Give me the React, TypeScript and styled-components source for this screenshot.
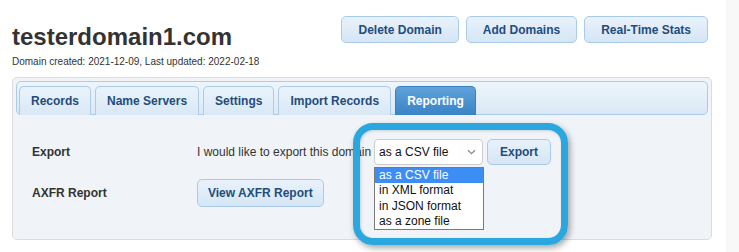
import React from "react";
import styled, { createGlobalStyle } from "styled-components";

const Global = createGlobalStyle`
  html, body { margin: 0; padding: 0; background: #fff; }
  body { font-family: "Liberation Sans", Arial, sans-serif; color: #333; }
`;

const Page = styled.div`
  display: flex;
  width: 739px;
  height: 252px;
  overflow: hidden;
`;

const Main = styled.div`
  width: 700px;
  padding: 16px 14px 0 12px;
  display: flex;
  flex-direction: column;
`;

const Strip = styled.div`
  width: 13px;
  background: #f8f8f8;
`;

const HeaderRow = styled.div`
  display: flex;
  justify-content: space-between;
  align-items: flex-start;
`;

const TitleBlock = styled.div`
  display: flex;
  flex-direction: column;
  gap: 4px;
  padding-top: 7px;
`;

const Title = styled.h1`
  margin: 0;
  font-size: 24px;
  line-height: 28px;
  font-weight: bold;
  color: #333;
`;

const Meta = styled.div`
  font-size: 10px;
  line-height: 14px;
  color: #333;
`;

const ButtonGroup = styled.div`
  display: flex;
  gap: 7px;
  margin-right: 4px;
`;

const Button = styled.button<{ $px: number; $h: number }>`
  height: ${(p) => p.$h}px;
  padding: 0 ${(p) => p.$px}px;
  font-family: "Liberation Sans", Arial, sans-serif;
  font-size: 12px;
  font-weight: bold;
  color: #234c7a;
  background: linear-gradient(#e9f2fb, #d5e6f5);
  border: 1px solid #a9cbe9;
  border-radius: 5px;
  white-space: nowrap;
  cursor: pointer;
`;

const Panel = styled.div`
  margin-top: 8px;
  height: 155px;
  border: 1px solid #dcdcdc;
  border-radius: 5px;
  background: #f0f3f7;
  padding: 3px;
  display: flex;
  flex-direction: column;
`;

const TabBar = styled.div`
  height: 30px;
  border: 1px solid #abcbe8;
  border-radius: 5px;
  background: linear-gradient(#eef5fc, #dae8f5);
  padding: 2px 2px 0;
  display: flex;
  align-items: flex-end;
  gap: 4px;
`;

const Tab = styled.div<{ $active?: boolean }>`
  height: 28px;
  margin-bottom: -1px;
  padding: 0 11px;
  display: flex;
  align-items: center;
  font-size: 12px;
  font-weight: bold;
  color: ${(p) => (p.$active ? "#fff" : "#234c7a")};
  background: ${(p) =>
    p.$active ? "linear-gradient(#60a2da, #3a83c6)" : "linear-gradient(#eaf3fb, #d9e8f6)"};
  border: 1px solid ${(p) => (p.$active ? "#3a7fc0" : "#abcbe8")};
  border-bottom: none;
  border-radius: 5px 5px 0 0;
`;

const Body = styled.div`
  display: grid;
  grid-template-columns: 165px auto;
  grid-template-rows: 26px 28px;
  row-gap: 14px;
  align-items: center;
  padding: 24px 0 0 16px;
`;

const Label = styled.div`
  font-size: 12px;
  font-weight: bold;
  color: #333;
`;

const ExportLine = styled.div`
  display: flex;
  align-items: center;
  font-size: 12px;
  color: #333;
`;

const Sentence = styled.span`
  width: 177px;
  white-space: nowrap;
  overflow: visible;
`;

const Controls = styled.div`
  position: relative;
  display: flex;
  gap: 4px;
  align-items: center;
`;

const Select = styled.div`
  width: 109px;
  height: 26px;
  box-sizing: border-box;
  border: 1px solid #cccccc;
  border-radius: 4px;
  background: #fff;
  display: flex;
  align-items: center;
  justify-content: space-between;
  padding: 0 6px 0 4px;
  font-size: 12px;
  color: #111;
`;

const DropList = styled.ul`
  position: absolute;
  left: 0;
  top: 28px;
  width: 110px;
  box-sizing: border-box;
  margin: 0;
  padding: 0;
  list-style: none;
  background: #fff;
  border: 1px solid #7a7a7a;
  z-index: 2;
`;

const Option = styled.li<{ $selected?: boolean }>`
  height: 15.25px;
  line-height: 15px;
  padding: 0 4px;
  font-size: 12px;
  color: ${(p) => (p.$selected ? "#fff" : "#111")};
  background: ${(p) => (p.$selected ? "#3d8ef4" : "#fff")};
  white-space: nowrap;
`;

const Highlight = styled.div`
  position: absolute;
  left: -21px;
  top: -16px;
  width: 215px;
  height: 122px;
  box-sizing: border-box;
  border: 7px solid #2aa7df;
  border-radius: 20px;
  box-shadow: 2px 3px 6px rgba(0, 0, 0, 0.35), inset 1px 1px 3px rgba(0, 0, 0, 0.15);
  z-index: 3;
  pointer-events: none;
`;

const Chevron = () => (
  <svg width="9" height="6" viewBox="0 0 9 6">
    <path d="M1 1.2 L4.5 4.6 L8 1.2" fill="none" stroke="#8a8a8a" strokeWidth="1.3" />
  </svg>
);

const tabs = ["Records", "Name Servers", "Settings", "Import Records", "Reporting"];
const options = ["as a CSV file", "in XML format", "in JSON format", "as a zone file"];

export default function App() {
  return (
    <Page>
      <Global />
      <Main>
        <HeaderRow>
          <TitleBlock>
            <Title>testerdomain1.com</Title>
            <Meta>Domain created: 2021-12-09, Last updated: 2022-02-18</Meta>
          </TitleBlock>
          <ButtonGroup>
            <Button $px={16} $h={27}>Delete Domain</Button>
            <Button $px={16} $h={27}>Add Domains</Button>
            <Button $px={16} $h={27}>Real-Time Stats</Button>
          </ButtonGroup>
        </HeaderRow>
        <Panel>
          <TabBar>
            {tabs.map((t) => (
              <Tab key={t} $active={t === "Reporting"}>
                {t}
              </Tab>
            ))}
          </TabBar>
          <Body>
            <Label>Export</Label>
            <ExportLine>
              <Sentence>I would like to export this domain</Sentence>
              <Controls>
                <Select>
                  <span>as a CSV file</span>
                  <Chevron />
                </Select>
                <Button $px={12} $h={26}>Export</Button>
                <DropList>
                  {options.map((o, i) => (
                    <Option key={o} $selected={i === 0}>
                      {o}
                    </Option>
                  ))}
                </DropList>
                <Highlight />
              </Controls>
            </ExportLine>
            <Label>AXFR Report</Label>
            <div>
              <Button $px={10} $h={28}>View AXFR Report</Button>
            </div>
          </Body>
        </Panel>
      </Main>
      <Strip />
    </Page>
  );
}
